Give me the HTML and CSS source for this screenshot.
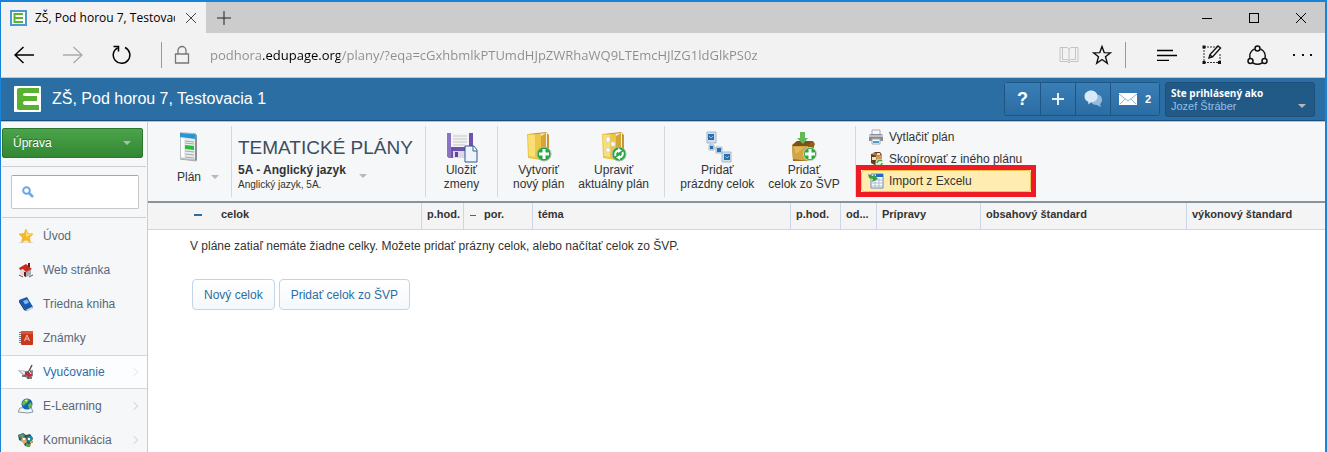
FILE: index.html
```html
<!DOCTYPE html>
<html lang="sk">
<head>
    <meta charset="UTF-8">
    <meta name="viewport" content="width=device-width, initial-scale=1.0">
    <title>ZŠ, Pod horou 7, Testovacia 1</title>
    <link rel="stylesheet" href="styles.css">
</head>
<body>
    <div class="window">
        <div class="tabs">
            <div class="tab">
                <svg class="favicon" width="17" height="16" viewBox="0 0 17 16"><rect width="17" height="16" fill="#4a98d8"/><rect x="2" y="2" width="13" height="12" fill="#fff"/><path d="M13 4H4.500v8H13M5 8h8" fill="none" stroke="#5ab52f" stroke-width="2"/></svg>
                <span class="tab-title">ZŠ, Pod horou 7, Testovacia 1</span>
                <button class="plain" aria-label="Zavrieť kartu"><svg width="12" height="12" viewBox="0 0 12 12"><path d="M1 1l10 10M11 1L1 11" stroke="#444" fill="none"/></svg></button>
            </div>
            <button class="plain new-tab" aria-label="Nová karta"><svg width="14" height="14" viewBox="0 0 14 14"><path d="M7 0v14M0 7h14" stroke="#222" fill="none"/></svg></button>
            <div class="window-buttons">
                <button class="plain" aria-label="Minimalizovať"><svg width="10" height="10"><path d="M0 5.500h10" stroke="#000"/></svg></button>
                <button class="plain" aria-label="Maximalizovať"><svg width="10" height="10"><rect x=".5" y=".5" width="9" height="9" fill="none" stroke="#000"/></svg></button>
                <button class="plain" aria-label="Zavrieť"><svg width="10" height="10"><path d="M0 0l10 10M10 0L0 10" stroke="#000"/></svg></button>
            </div>
        </div>

        <div class="address-bar">
            <div class="nav-buttons">
                <button class="plain" aria-label="Späť"><svg width="20" height="18" viewBox="0 0 20 18"><path d="M9.500 1L1 9l8.500 8M1 9h19" fill="none" stroke="#000" stroke-width="1.500"/></svg></button>
                <button class="plain" aria-label="Dopredu"><svg width="20" height="18" viewBox="0 0 20 18"><path d="M10.500 1L19 9l-8.500 8M19 9H0" fill="none" stroke="#aaa" stroke-width="1.300"/></svg></button>
                <button class="plain" aria-label="Obnoviť"><svg width="20" height="20" viewBox="0 0 20 20"><path d="M13 2.500a8.300 8.300 0 1 1-7.500.3M1.500 1.500h5v5" fill="none" stroke="#000" stroke-width="1.500"/></svg></button>
            </div>
            <span class="bar-line"></span>
            <svg class="lock" width="16" height="20" viewBox="0 0 16 20"><path d="M1.500 9h13v9h-13zM4 9V5.500a4 4 0 0 1 8 0V9" fill="none" stroke="#777" stroke-width="1.300"/></svg>
            <input class="url" type="text" aria-label="Adresa" value="podhora.edupage.org/plany/?eqa=cGxhbmlkPTUmdHJpZWRhaWQ9LTEmcHJlZG1ldGlkPS0z">
            <div class="page-buttons">
                <button class="plain" aria-label="Čítanie"><svg width="20" height="18" viewBox="0 0 20 18"><path d="M10 3.500L8.500 1.500H1v14h7.500L10 17l1.500-1.500H19v-14h-7.500L10 3.500V16M3.500 1.500v12h5L10 15l1.500-1.500h5v-12" fill="none" stroke="#c4c4c4"/></svg></button>
                <button class="plain" aria-label="Obľúbené"><svg width="20" height="20" viewBox="0 0 20 20"><path d="M10 1.500l2.200 6.100 6.300.2-5 4 1.800 6.400L10 14.500l-5.300 3.700 1.800-6.400-5-4 6.300-.2z" fill="none" stroke="#111" stroke-width="1.400"/></svg></button>
            </div>
            <span class="bar-line"></span>
            <div class="hub-buttons">
                <button class="plain" aria-label="Centrum"><svg width="20" height="12" viewBox="0 0 20 12"><path d="M0 1.500h16M0 6.500h20M0 11.500h12" stroke="#000" stroke-width="1.300"/></svg></button>
                <button class="plain" aria-label="Poznámka"><svg width="20" height="20" viewBox="0 0 20 20"><path d="M2 2h15M2 17.500h16M2 2v15.500M18 9v8" fill="none" stroke="#333" stroke-dasharray="2 1"/><path d="M.5.500h3v3h-3zM.5 16h3v3h-3zM16 16h3v3h-3z" fill="#111"/><path d="M7 13l1-3.500L16 1l2.500 2L10.500 12zM8 10l2.500 2" fill="#f2f2f2" stroke="#111" stroke-width="1.400"/></svg></button>
                <button class="plain" aria-label="Zdieľať"><svg width="21" height="21" viewBox="0 0 21 21"><path d="M7.500 4A8 8 0 0 0 3 13M13.500 4A8 8 0 0 1 18 13M6 18a9 9 0 0 0 9 0" fill="none" stroke="#111" stroke-width="1.500"/><g fill="none" stroke="#111" stroke-width="1.500"><circle cx="10.500" cy="3.500" r="2.500"/><circle cx="3.500" cy="16" r="2.500"/><circle cx="17.500" cy="16" r="2.500"/></g></svg></button>
                <button class="plain" aria-label="Viac"><svg width="20" height="4" viewBox="0 0 20 4"><path d="M0 1h2v2H0zM9 1h2v2H9zM17 1h2v2h-2z" fill="#111"/></svg></button>
            </div>
        </div>

        <header class="header">
            <svg width="27" height="26" viewBox="0 0 27 26"><rect width="27" height="26" rx="1" fill="#fff"/><path d="M5 2h20v5H11q-2 0-2 1.500T11 10h12v5H11q-2 0-2 2t2 2h14v5H5q-2 0-2-2V4q0-2 2-2z" fill="#58b230"/></svg>
            <h1>ZŠ, Pod horou 7, Testovacia 1</h1>
            <div class="header-buttons">
                <button class="help">?</button>
                <button aria-label="Pridať"><svg width="12" height="12"><path d="M6 0v12M0 6h12" stroke="#e4f0fa" stroke-width="2"/></svg></button>
                <button aria-label="Správy"><svg width="19" height="18" viewBox="0 0 19 18"><path d="M12 5c4-1 6 2 6 5 0 2-1 3-2 4l1 3-4-2c-3 0-5-1-6-3z" fill="#93bce0"/><path d="M7 .5c4 0 6.500 2.500 6.500 6S11 12 7.500 12L4 14.500 4.500 12C2 11 .5 9 .5 6.500c0-3.500 3-6 6.500-6z" fill="#d8e9f8"/></svg></button>
                <button class="mail" aria-label="Pošta 2"><svg width="18" height="12" viewBox="0 0 18 12"><rect width="18" height="12" fill="#fff"/><path d="M0 1l9 7 9-7M1 11l5-5M17 11l-5-5" fill="none" stroke="#8fb5d5"/></svg><span>2</span></button>
            </div>
            <button class="user">
                <span class="user-text"><b>Ste prihlásený ako</b><span>Jozef Štráber</span></span>
                <span class="arrow"></span>
            </button>
        </header>

        <div class="content">
            <aside class="sidebar">
                <button class="edit-button">Úprava <span class="arrow"></span></button>
                <div class="search">
                    <label for="search" aria-label="Hľadať"><svg width="12" height="12" viewBox="0 0 12 12"><circle cx="4.500" cy="4.500" r="3.300" fill="none" stroke="#6ba7e8" stroke-width="2"/><path d="M7 7l4 4" stroke="#6ba7e8" stroke-width="2.500"/></svg></label>
                    <input type="text" id="search">
                </div>
                <nav>
                    <a href="#"><svg width="16" height="16" viewBox="0 0 16 16"><path d="M1 14.500h14" stroke="#ddd"/><path d="M8 1l2 4.500 5 .5-3.500 3.500 1 5L8 12l-4.500 2.500 1-5L1 6l5-.5z" fill="#f4b92b" stroke="#efa51d" stroke-width=".5"/><path d="M8 2l1.500 4H14L8 9z" fill="#ffe066"/></svg>Úvod</a>
                    <a href="#"><svg width="16" height="16" viewBox="0 0 16 16"><path d="M2 7l4-2 7 3v5l-5 2-6-3z" fill="#ddd"/><path d="M8 9l5-1v5l-5 2z" fill="#a9adb3"/><path d="M1 6l7-4 6 5-6 3-3-3-3 1z" fill="#c92b20"/><path d="M10 1h2v4h-2zM6 10h2v5l-2-1z" fill="#7c1510"/><path d="M1 13l4 2M11 15l4-2" stroke="#555"/></svg>Web stránka</a>
                    <a href="#"><svg width="16" height="16" viewBox="0 0 16 16"><path d="M1 4l8-3 6 10-7 4z" fill="#1459b0"/><path d="M1 4l7 11-2-1-5-8z" fill="#092d6a"/><path d="M8 14l6-3 1 1-6 3z" fill="#f4f4f4" stroke="#999" stroke-width=".5"/><path d="M5 5l4-1.500 2 3-4 2z" fill="#82b8f0"/></svg>Triedna kniha</a>
                    <a href="#"><svg width="16" height="16" viewBox="0 0 16 16"><rect x="3" y="1" width="12" height="14" rx="1" fill="#c9371b"/><path d="M3 1h12v3H3z" fill="#e25332"/><path d="M2 2v12" stroke="#777" stroke-dasharray="1 1" stroke-width="2"/><path d="M6.500 11L9 5l2.500 6M7.500 9h3" stroke="#f3c5b5" fill="none"/></svg>Známky</a>
                    <a href="#" class="active"><svg width="16" height="16" viewBox="0 0 16 16"><path d="M0 6l8 1 7-1v6l-5 3-4-3z" fill="#858b92"/><path d="M1 6l7 2-2 3z" fill="#e6eaec"/><path d="M7 8l6-1 1 5-4 1-3-3z" fill="#c52a37"/><path d="M14 1l-4 8M4 12h4M9 14h5" stroke="#555" stroke-width="1.500"/><path d="M11 7l2 3" stroke="#fff"/></svg>Vyučovanie<i class="chevron"></i></a>
                    <a href="#"><svg width="16" height="16" viewBox="0 0 16 16"><path d="M2 10L0 14l10 1 5-1-2-5z" fill="#f3f5f7" stroke="#8a96a8"/><circle cx="9" cy="6" r="5.500" fill="#1262b8"/><path d="M5 3c2-2 4-2 6-1L9 5 7 6 6 8 4 6zM10 7l3-3 1 4-3 3z" fill="#65bd45"/><path d="M7 2l3-.5L8 4z" fill="#e8f59a"/></svg>E-Learning<i class="chevron"></i></a>
                    <a href="#"><svg width="16" height="16" viewBox="0 0 16 16"><path d="M0 3l5-2 3 2 4-1 3 4-2 4-1 5-5-1-2-4-4-2z" fill="#285d55"/><path d="M1 3l4-1 2 2-5 2z" fill="#619b76"/><path d="M4 5l4 1 1 4-3 2-3-3z" fill="#e4a575"/><path d="M9 5l4-1 2 4-4 2-2-2z" fill="#2390ac"/><path d="M5 6h2v2H5zM10 6h2v2h-2z" fill="#fff"/><path d="M8 11l4 1v3l-4-1z" fill="#55a63c"/><path d="M12 9h3v2h-3z" fill="#e9952f"/></svg>Komunikácia<i class="chevron"></i></a>
                </nav>
            </aside>

            <main>
                <div class="toolbar">
                    <div class="group plan">
                        <button class="tool">
                            <svg width="20" height="32" viewBox="0 0 20 32"><path d="M1 1l16 1v28L1 28z" fill="#bcc3c7"/><path d="M2 2l14 1v25L2 27z" fill="#e8ecec"/><path d="M1 2l15 1v5L1 6z" fill="#2796d3"/><path d="M2 7l3 1v18l-3-1z" fill="#fff"/><path d="M6 10l9 1M6 12l9 1M6 20l9 1M6 23l9 1M6 26l9 1" stroke="#a2aaaa"/><path d="M6 14l9 1v4l-9-1z" fill="#28bd36"/><path d="M16 3l2 1v26l-2-1z" fill="#899299"/><path d="M1 28l16 2" stroke="#aaa"/></svg>
                            Plán
                        </button>
                        <span class="arrow"></span>
                    </div>
                    <div class="group title">
                        <div>
                            <h2>TEMATICKÉ PLÁNY</h2>
                            <h3>5A - Anglický jazyk</h3>
                            <p>Anglický jazyk, 5A.</p>
                        </div>
                        <span class="arrow"></span>
                    </div>
                    <div class="group save">
                        <button class="tool">
                            <svg width="32" height="32" viewBox="0 0 32 32"><path d="M1 2h26v25H3l-2-2z" fill="#6b53ae"/><path d="M1 2h4v25H3l-2-2z" fill="#8b73c7"/><path d="M5 2h18v14H5z" fill="#f4f4f5"/><path d="M7 5h14M7 8h14M7 11h14M7 14h12" stroke="#c5c5c8"/><path d="M7 20h12v7H7z" fill="#ddd8e8"/><path d="M9 21h3v5H9z" fill="#5e459d"/><path d="M19 15h9l3 4v12H19z" fill="#edf4fd" stroke="#315b8e"/><path d="M27 15v5h4" fill="#fff" stroke="#315b8e"/></svg>
                            Uložiť<br>zmeny
                        </button>
                    </div>
                    <div class="group plans">
                        <button class="tool">
                            <svg width="26" height="32" viewBox="2 0 26 32"><path d="M4 3l18-2 3 3v22l-8 3-12-3z" fill="#c59832"/><path d="M14 3l9-1v24l-8 2z" fill="#f5f3e8"/><path d="M3 3h14v26l-13-2z" fill="#efc545"/><path d="M4 4h7v22l-6-1z" fill="#ffe98d" opacity=".7"/><path d="M17 5l5-3v22l-5 5z" fill="#d4a633"/><circle cx="20" cy="23" r="7" fill="#25a73b" stroke="#a8b8a8"/><path d="M20 18v10M15 23h10" stroke="#fff" stroke-width="3"/></svg>
                            Vytvoriť<br>nový plán
                        </button>
                        <button class="tool">
                            <svg width="26" height="32" viewBox="2 0 26 32"><path d="M4 3l18-2 3 3v22l-8 3-12-3z" fill="#c59832"/><path d="M14 3l9-1v24l-8 2z" fill="#f5f3e8"/><path d="M3 3h14v26l-13-2z" fill="#efc545"/><path d="M4 4h7v22l-6-1z" fill="#ffe98d" opacity=".7"/><path d="M17 5l5-3v22l-5 5z" fill="#d4a633"/><path d="M7 6h4v5H7zM12 11h4v4h-4zM7 17h4v4H7z" fill="#fff" stroke="#d5d0c0"/><circle cx="20" cy="23" r="7" fill="#25a73b" stroke="#a8b8a8"/><path d="M16.500 25a4 4 0 0 1 3-5.500M23.500 21a4 4 0 0 1-3 5.500" fill="none" stroke="#fff" stroke-width="2"/><path d="M19 17l4 2.500-4 2.500zM21 24l-4 2.500 4 2.500z" fill="#fff"/></svg>
                            Upraviť<br>aktuálny plán
                        </button>
                    </div>
                    <div class="group units">
                        <button class="tool">
                            <svg width="30" height="32" viewBox="2 0 30 32"><path d="M10 12l2 5h6l5 6" fill="none" stroke="#bfcbd7"/><g fill="#d0deea" stroke="#a7b9ca"><path d="M7 1h9v11H7zM9 14h5v5H9zM16 16h6v6h-6zM22 21h9v10h-9z"/></g><path d="M8 3h6v6H8zM10 15h3v3h-3zM17 17h4v4h-4zM24 23h6v6h-6z" fill="#2871ae"/><path d="M9 5l2 2 2-2M25 25l2 2 2-2" fill="none" stroke="#8fbbdf"/></svg>
                            Pridať<br>prázdny celok
                        </button>
                        <button class="tool">
                            <svg width="26" height="32" viewBox="2 0 26 32"><path d="M3 14l5-4h16l2 3-7 17H4z" fill="#9d6c18"/><path d="M3 14h16v16L4 28z" fill="#d3a443"/><path d="M8 10h16l-5 5H3z" fill="#785216"/><path d="M19 15l6-4-1 14-5 5z" fill="#8d6015"/><path d="M5 16h11l-9 7z" fill="#edc76d" opacity=".6"/><path d="M11 1h5v6h3l-5 6-6-6h3z" fill="#62b957"/><circle cx="21" cy="23" r="6.500" fill="#29aa32" stroke="#c9d8c9"/><path d="M21 18v10M16 23h10" stroke="#fff" stroke-width="3"/></svg>
                            Pridať<br>celok zo ŠVP
                        </button>
                    </div>
                    <div class="group actions">
                        <button><svg width="16" height="16" viewBox="0 0 16 16"><path d="M4 1h8v6H4z" fill="#f8f8f8" stroke="#aaa"/><path d="M1 6l2-1h10l2 1v6H1z" fill="#858b95"/><path d="M1 6h14v2H1z" fill="#bcc1c7"/><path d="M4 10h8v5H4z" fill="#fff" stroke="#aaa"/><path d="M5 12h6v2H5z" fill="#4a9fd2"/></svg>Vytlačiť plán</button>
                        <button><svg width="16" height="16" viewBox="0 0 16 16"><path d="M3 3l6-2 5 3v8l-6 3-5-3z" fill="#ae783a"/><path d="M3 3l5 2v9l-5-2zM5 1l5 2 4 1-2-3z" fill="#67401b"/><path d="M8 5l6-1v6l-5 2z" fill="#d29c56"/><path d="M4 6h4v3H4zM9 2h3v2H9z" fill="#eee0ca"/><circle cx="11.500" cy="12" r="4" fill="#e5f2e2"/><path d="M9 12a3 3 0 0 1 5-2M9 14a3 3 0 0 0 5-2" fill="none" stroke="#46a243" stroke-width="1.500"/></svg>Skopírovať z iného plánu</button>
                        <button class="highlight"><svg width="16" height="16" viewBox="0 0 16 16"><path d="M3 1h12v14H3z" fill="#fff" stroke="#6588b6"/><path d="M8 1h7v3H8z" fill="#2668c5"/><path d="M4 7h10M4 10h10M4 13h10M7 5v9M11 5v9" stroke="#a9bdd7"/><path d="M0 1l5 2 1-2 4 5-6 3 1-3-4-1z" fill="#37a23b"/></svg>Import z Excelu</button>
                    </div>
                </div>

                <table>
                    <colgroup>
                        <col class="col-unit"><col class="col-hours"><col class="col-order"><col class="col-topic"><col class="col-hours-topic"><col class="col-from"><col class="col-prep"><col class="col-content"><col>
                    </colgroup>
                    <thead>
                        <tr>
                            <th class="unit"><i class="minus"></i>celok</th>
                            <th>p.hod.</th>
                            <th><i class="minus small"></i>por.</th>
                            <th>téma</th>
                            <th>p.hod.</th>
                            <th>od...</th>
                            <th>Prípravy</th>
                            <th>obsahový štandard</th>
                            <th>výkonový štandard</th>
                        </tr>
                    </thead>
                </table>

                <div class="empty">
                    <p>V pláne zatiaľ nemáte žiadne celky. Možete pridať prázny celok, alebo načítať celok zo ŠVP.</p>
                    <div class="buttons">
                        <button>Nový celok</button>
                        <button>Pridať celok zo ŠVP</button>
                    </div>
                </div>
            </main>
        </div>
    </div>
</body>
</html>
```

FILE: styles.css
```css
* {
    box-sizing: border-box;
}
body {
    margin: 0;
    font-family: "Liberation Sans", Arial, sans-serif;
    font-size: 12px;
    color: #333;
}
button, input {
    font-family: inherit;
    font-size: inherit;
    color: inherit;
}
button {
    padding: 0;
    border: 0;
    background: none;
}
h1, h2, h3, p {
    margin: 0;
    font-weight: normal;
}
svg {
    display: block;
    flex: none;
}
.window {
    display: flex;
    flex-direction: column;
    height: 100vh;
    overflow: hidden;
    border: solid #1883d7;
    border-width: 2px 2px 0 1px;
}
.plain {
    display: flex;
    align-items: center;
    justify-content: center;
}
.arrow {
    flex: none;
    border: 4px solid transparent;
    border-top-color: #b5b8ba;
    border-bottom: 0;
}

/* browser */
.tabs {
    display: flex;
    flex: none;
    height: 31px;
    background: #ccc;
}
.tab {
    display: flex;
    align-items: center;
    width: 205px;
    padding: 0 9px;
    background: #f2f2f2;
}
.tab-title {
    flex: 1;
    margin: 0 10px 0 8px;
    overflow: hidden;
    white-space: nowrap;
    font: 12px "Open Sans", sans-serif;
    color: #000;
}
.new-tab {
    width: 35px;
}
.window-buttons {
    display: flex;
    margin-left: auto;
    margin-right: 1px;
}
.window-buttons button {
    width: 47px;
}
.address-bar {
    display: flex;
    align-items: center;
    flex: none;
    height: 45px;
    padding: 0 12px 0 13px;
    background: #f2f2f2;
    border-bottom: 1px solid #c4c6c8;
}
.nav-buttons {
    display: flex;
    gap: 29px;
    margin-right: 29px;
}
.bar-line {
    width: 1px;
    height: 26px;
    background: #999;
}
.lock {
    margin: 0 20px 0 12px;
}
.url {
    flex: 1;
    min-width: 0;
    padding: 0;
    border: 0;
    outline: 0;
    font: 13px "Open Sans", sans-serif;
    color: transparent;
    caret-color: #000;
    /* the domain is darker than the rest of the address */
    background: linear-gradient(to right, #8c8c8c 52px, #000 52px, #000 130px, #8c8c8c 130px);
    -webkit-background-clip: text;
    background-clip: text;
}
.page-buttons {
    display: flex;
    gap: 13px;
    margin-right: 13px;
}
.hub-buttons {
    display: flex;
    align-items: center;
    gap: 25px;
    margin-left: 31px;
}

/* header */
.header {
    display: flex;
    align-items: center;
    flex: none;
    height: 43px;
    padding: 0 10px 0 13px;
    background: #2b6ea3;
    border-bottom: 1px solid #1b4f80;
}
.header h1 {
    margin-left: 11px;
    font-size: 16px;
    color: #fff;
}
.header-buttons {
    display: flex;
    margin-left: auto;
    border: 1px solid #1f5585;
    border-radius: 3px;
}
.header-buttons button {
    display: flex;
    align-items: center;
    justify-content: center;
    gap: 8px;
    width: 35px;
    height: 32px;
    color: #fff;
    background: linear-gradient(#3a7eb6, #2b6ca3);
    border-left: 1px solid #1f5585;
}
.header-buttons button:first-child {
    border-left: 0;
}
.header-buttons .help {
    font-size: 18px;
    font-weight: bold;
}
.header-buttons .mail {
    width: 49px;
    font-size: 11px;
    font-weight: bold;
}
.header .user {
    display: flex;
    align-items: center;
    justify-content: space-between;
    width: 150px;
    height: 35px;
    margin-left: 5px;
    padding: 0 8px 0 5px;
    text-align: left;
    background: #215987;
    border: 1px solid #1d4f79;
    border-radius: 3px;
}
.user-text {
    display: flex;
    flex-direction: column;
    font-size: 11px;
    color: #90c0ea;
}
.user-text b {
    font: bold 10px "Open Sans", sans-serif;
    color: #fff;
}
.user .arrow {
    margin-top: 14px;
}

/* sidebar */
.content {
    display: flex;
    flex: 1;
    min-height: 0;
    border-top: 1px solid #b9c0c6;
}
.sidebar {
    flex: none;
    width: 147px;
    padding: 6px 1px 0;
    background: #f5f7f9;
    border-right: 1px solid #ccc;
}
.edit-button {
    display: flex;
    align-items: center;
    justify-content: space-between;
    width: 141px;
    height: 30px;
    padding: 0 11px 0 10px;
    font-size: 12px;
    color: #fff;
    text-shadow: 0 -1px #286528;
    background: linear-gradient(#4aa44a, #338733);
    border: 1px solid #2c752c;
    border-radius: 2px;
}
.search {
    display: flex;
    align-items: center;
    height: 52px;
    margin-top: 8px;
    padding: 0 6px 0 9px;
    border: solid #ccd0d6;
    border-width: 1px 0;
}
.search label {
    width: 0;
}
.search label svg {
    position: relative;
    left: 11px;
    z-index: 1;
}
.search input {
    width: 128px;
    height: 34px;
    padding: 0 8px 0 28px;
    background: #fff;
    border: 1px solid #c4c6c8;
    border-top-color: #a5a8ab;
    border-radius: 2px;
}
nav {
    padding-top: 1px;
    margin: 0 -1px;
}
nav a {
    display: flex;
    align-items: center;
    gap: 9px;
    height: 34px;
    padding: 0 10px 0 17px;
    color: #596778;
    text-decoration: none;
}
nav .active {
    color: #2b6ea3;
    background: #fcfdfe;
    border: solid #d5d7da;
    border-width: 1px 0;
}
.chevron {
    width: 6px;
    height: 6px;
    margin-left: auto;
    border: solid #d5d8dc;
    border-width: 1px 1px 0 0;
    transform: rotate(45deg);
}
.active .chevron {
    border-color: #e8eaed;
}

/* toolbar */
main {
    flex: 1;
    min-width: 0;
    background: #fff;
}
.toolbar {
    display: flex;
    height: 81px;
    padding: 4px 0;
    background: #f5f7f9;
    border-bottom: 2px solid #87939f;
}
.group {
    display: flex;
    justify-content: center;
    border-right: 1px solid #d5d8dc;
}
.tool {
    display: flex;
    flex-direction: column;
    align-items: center;
    line-height: 14px;
    white-space: nowrap;
    padding-top: 5px;
}
.plan {
    width: 84px;
    gap: 10px;
    justify-content: flex-end;
    padding-right: 12px;
}
.plan .tool svg {
    margin-bottom: 7px;
}
.plan .arrow {
    margin-top: 49px;
}
.title {
    width: 194px;
    gap: 8px;
    justify-content: flex-start;
    padding: 10px 0 0 6px;
    white-space: nowrap;
}
.title h2 {
    font-size: 19px;
    line-height: 24px;
    color: #3d4d5e;
}
.title h3 {
    font-size: 12px;
    line-height: 20px;
    font-weight: bold;
}
.title p {
    font-size: 10px;
    line-height: 10px;
}
.title > div {
    width: 113px;
}
.title .arrow {
    margin-top: 38px;
}
.save {
    width: 72px;
}
.plans {
    width: 167px;
    gap: 14px;
}
.units {
    width: 191px;
    gap: 14px;
}
.actions {
    flex-direction: column;
    justify-content: flex-start;
    border-right: 0;
    padding-left: 5px;
}
.actions button {
    position: relative;
    display: flex;
    align-items: center;
    gap: 5px;
    width: 170px;
    height: 22px;
    padding-left: 6px;
    border: 1px solid transparent;
    border-radius: 3px;
    white-space: nowrap;
}
.actions .highlight {
    background: #ffecb0;
    border-color: #edc34b;
}
.highlight::after {
    content: "";
    position: absolute;
    inset: -6px;
    border: 5px solid #ed1c24;
}

/* table */
table {
    width: 100%;
    table-layout: fixed;
    border-collapse: separate;
    border-spacing: 0;
}
th {
    height: 27px;
    padding: 0 0 4px 5px;
    text-align: left;
    font-size: 11px;
    font-weight: bold;
    white-space: nowrap;
    overflow: hidden;
    background: #f4f4f4;
    border: solid #c8d8e8;
    border-width: 0 1px 1px 0;
}
th:last-child {
    border-right: 0;
}
.unit {
    padding-left: 46px;
}
.minus {
    display: inline-block;
    width: 8px;
    height: 2px;
    margin-right: 19px;
    vertical-align: middle;
    background: #2b6ea3;
}
.minus.small {
    width: 6px;
    height: 1px;
    margin: 0 8px 0 1px;
}
.col-unit {
    width: 274px;
}
.col-hours {
    width: 42px;
}
.col-order {
    width: 69px;
}
.col-topic {
    width: 258px;
}
.col-hours-topic {
    width: 50px;
}
.col-from {
    width: 36px;
}
.col-prep {
    width: 104px;
}
.col-content {
    width: 206px;
}

.empty {
    padding: 8px 42px;
}
.empty p {
    line-height: 16px;
}
.buttons {
    display: flex;
    gap: 4px;
    margin: 25px 2px;
}
.buttons button {
    height: 31px;
    padding: 0 11px;
    color: #2b6ea3;
    background: linear-gradient(#fff, #f5f8fb);
    border: 1px solid #c2d5e7;
    border-radius: 4px;
}
```
